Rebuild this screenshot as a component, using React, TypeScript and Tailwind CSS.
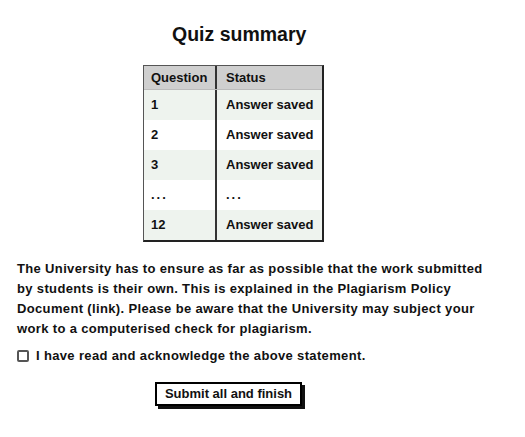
import React from 'react'

const rows = [
  { q: '1', s: 'Answer saved' },
  { q: '2', s: 'Answer saved' },
  { q: '3', s: 'Answer saved' },
  { q: '...', s: '...' },
  { q: '12', s: 'Answer saved' },
]

export default function App() {
  return (
    <div className="w-[525px] h-[437px] bg-white text-[#111] font-['Liberation_Sans',Arial,sans-serif] font-bold">
      <h1 className="pt-[20px] pl-[172px] text-[19.5px] leading-[28px]">Quiz summary</h1>

      <div className="mt-[17px] ml-[143px] w-[181px] border-l border-t border-[#555] border-r-2 border-b-2 border-r-[#222] border-b-[#222]">
        <div className="flex h-[24px] bg-[#cfcfcf] text-[13px] items-center border-b border-[#bbb]">
          <div className="w-[73px] pl-[7px] border-r-2 border-[#333] h-full flex items-center">Question</div>
          <div className="flex-1 pl-[9px]">Status</div>
        </div>
        {rows.map((r, i) => (
          <div key={i} className={`flex h-[30px] text-[13px] items-center ${i % 2 === 0 ? 'bg-[#eef3ee]' : 'bg-white'}`}>
            <div className={`w-[73px] pl-[7px] border-r-2 border-[#333] h-full flex items-center ${r.q === '...' ? 'tracking-[2px]' : ''}`}>{r.q}</div>
            <div className={`flex-1 pl-[9px] ${r.s === '...' ? 'tracking-[2px]' : ''}`}>{r.s}</div>
          </div>
        ))}
      </div>

      <p className="mt-[17px] ml-[17px] text-[13px] leading-[20px] tracking-[0.35px]">
        The University has to ensure as far as possible that the work submitted<br />
        by students is their own. This is explained in the Plagiarism Policy<br />
        Document (link). Please be aware that the University may subject your<br />
        work to a computerised check for plagiarism.
      </p>

      <label className="mt-[7px] ml-[17px] flex items-center gap-[7px] text-[13px] leading-[20px] tracking-[0.35px]">
        <span className="w-[12px] h-[12px] border-2 border-[#555] rounded-[2px]" />
        I have read and acknowledge the above statement.
      </label>

      <div className="mt-[16px] ml-[155px] flex">
        <button className="w-[147px] h-[24px] border-2 border-black shadow-[3px_3px_0_#111] bg-white text-[13px] leading-[20px] font-bold">
          Submit all and finish
        </button>
      </div>
    </div>
  )
}
